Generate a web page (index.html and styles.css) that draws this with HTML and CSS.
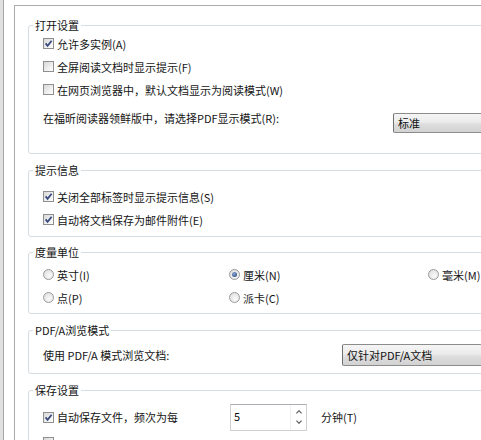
FILE: index.html
```html
<!DOCTYPE html>
<html>
<head>
<meta charset="utf-8">
<link rel="stylesheet" href="styles.css">
</head>
<body>
<div class="window">
  <div class="side"><div class="side-bar"></div></div>
  <div class="panel">

    <fieldset class="group g-open">
      <legend>打开设置</legend>
      <label class="row"><span class="chk"><svg viewBox="0 0 9 9"><path d="M1.6 4.4 L3.6 6.8 L7.6 1.8"/></svg></span>允许多实例(A)</label>
      <label class="row"><span class="chk"></span>全屏阅读文档时显示提示(F)</label>
      <label class="row"><span class="chk"></span>在网页浏览器中，默认文档显示为阅读模式(W)</label>
      <div class="row row-select">
        <span class="lbl lbl-wide">在福昕阅读器领鲜版中，请选择PDF显示模式(R):</span>
        <div class="combo combo-std">标准</div>
      </div>
    </fieldset>

    <fieldset class="group g-tips">
      <legend>提示信息</legend>
      <label class="row"><span class="chk"><svg viewBox="0 0 9 9"><path d="M1.6 4.4 L3.6 6.8 L7.6 1.8"/></svg></span>关闭全部标签时显示提示信息(S)</label>
      <label class="row"><span class="chk"><svg viewBox="0 0 9 9"><path d="M1.6 4.4 L3.6 6.8 L7.6 1.8"/></svg></span>自动将文档保存为邮件附件(E)</label>
    </fieldset>

    <fieldset class="group g-unit">
      <legend>度量单位</legend>
      <div class="radios">
        <label class="row"><span class="radio"></span>英寸(I)</label>
        <label class="row"><span class="radio on"></span>厘米(N)</label>
        <label class="row"><span class="radio"></span>毫米(M)</label>
        <label class="row"><span class="radio"></span>点(P)</label>
        <label class="row"><span class="radio"></span>派卡(C)</label>
      </div>
    </fieldset>

    <fieldset class="group g-pdfa">
      <legend>PDF/A浏览模式</legend>
      <div class="row row-pdfa">
        <span class="lbl lbl-pdfa">使用 PDF/A 模式浏览文档:</span>
        <div class="combo combo-pdfa">仅针对PDF/A文档</div>
      </div>
    </fieldset>

    <fieldset class="group g-save">
      <legend>保存设置</legend>
      <div class="row row-save">
        <label class="save-lbl"><span class="chk"><svg viewBox="0 0 9 9"><path d="M1.6 4.4 L3.6 6.8 L7.6 1.8"/></svg></span>自动保存文件，频次为每</label>
        <div class="spin">
          <span class="spin-val">5</span>
          <span class="spin-btns">
            <svg viewBox="0 0 7 4"><path d="M0.5 3.5 L3.5 0.5 L6.5 3.5"/></svg>
            <svg viewBox="0 0 7 4"><path d="M0.5 0.5 L3.5 3.5 L6.5 0.5"/></svg>
          </span>
        </div>
        <span class="unit">分钟(T)</span>
      </div>
      <div class="row row-next"><span class="chk"></span></div>
    </fieldset>

  </div>
</div>
</body>
</html>
```

FILE: styles.css
```css
body {
	margin: 0;
	overflow: hidden;
	background: #fff;
	font-family: "Noto Sans CJK SC", "Microsoft YaHei", sans-serif;
	font-size: 11px;
	line-height: 14px;
	color: #141414;
}

.window {
	display: flex;
	width: 560px;
	height: 440px;
}

.side {
	flex: none;
	width: 14px;
	display: flex;
}
.side-bar {
	width: 3px;
	background: #e0e0e0;
	border-right: 1px solid #a6a6a6;
}

.panel {
	flex: none;
	width: 530px;
	margin-top: 5px;
	padding-left: 13px;
	border-left: 1px solid #ababab;
	border-top: 1px solid #ababab;
}

/* group boxes */
.group {
	width: 500px;
	margin: 0;
	padding: 0;
	border: 1px solid #d6dde2;
	border-radius: 3px;
}
.group legend {
	margin-left: 4px;
	padding: 0 2px;
	line-height: 14px;
	color: #141414;
}
.g-open { margin-top: 12px; padding-bottom: 16px; }
.g-tips { margin-top: 9px; padding-top: 8px; padding-bottom: 5px; }
.g-unit { margin-top: 8px; padding-top: 4px; padding-bottom: 4px; }
.g-pdfa { margin-top: 9px; padding-top: 5px; padding-bottom: 5px; }
.g-save { margin-top: 9px; padding-top: 6px; }

.row {
	display: flex;
	align-items: center;
	height: 23px;
	padding-left: 14px;
	white-space: nowrap;
}

/* checkbox */
.chk {
	flex: none;
	box-sizing: border-box;
	width: 11px;
	height: 11px;
	margin-right: 3px;
	border: 1px solid #8e8f8f;
	background: linear-gradient(135deg, #d8d8d8, #f4f4f4 70%, #fff);
	display: flex;
	align-items: center;
	justify-content: center;
}
.chk svg {
	width: 9px;
	height: 9px;
	fill: none;
	stroke: #34487c;
	stroke-width: 1.7;
}

/* radio */
.radio {
	flex: none;
	box-sizing: border-box;
	width: 11px;
	height: 11px;
	margin-right: 3px;
	border: 1px solid #9a9a9a;
	border-radius: 50%;
	background: radial-gradient(circle at 60% 65%, #fafafa, #dadada);
	display: flex;
	align-items: center;
	justify-content: center;
}
.radio.on::after {
	content: "";
	width: 5px;
	height: 5px;
	border-radius: 50%;
	background: radial-gradient(circle at 40% 35%, #8ba7d4, #1f3e72);
}

.radios {
	display: grid;
	grid-template-columns: 200px 199px auto;
}
.radios .row { padding-left: 0; }
.radios .row:nth-child(3n+1) { padding-left: 14px; }

/* combo boxes */
.combo {
	flex: none;
	box-sizing: border-box;
	width: 140px;
	padding-left: 4px;
	border: 1px solid #8c8c8c;
	border-left-color: #707070;
	border-radius: 2px;
	background: linear-gradient(#f5f5f5, #ececec 45%, #dedede 55%, #d2d2d2);
	display: flex;
	align-items: center;
	color: #111;
}

.row-select {
	height: 36px;
	align-items: flex-start;
}
.lbl-wide {
	width: 350px;
	margin-top: 10px;
}
.combo-std {
	height: 20px;
	margin-top: 12px;
}

.row-pdfa { height: 26px; }
.lbl-pdfa { width: 299px; }
.combo-pdfa { height: 22px; }

/* autosave */
.row-save { height: 28px; }
.save-lbl {
	width: 187px;
	display: flex;
	align-items: center;
}
.spin {
	flex: none;
	box-sizing: border-box;
	width: 77px;
	height: 27px;
	border: 1px solid #d0d0d0;
	border-top-color: #abadb3;
	display: flex;
}
.spin-val {
	flex: 1;
	padding: 4px 0 0 3px;
	color: #111;
}
.spin-btns {
	width: 15px;
	display: flex;
	flex-direction: column;
	justify-content: center;
	gap: 6px;
	align-items: center;
	border-left: 1px solid #f0f0f0;
}
.spin-btns svg {
	width: 6px;
	height: 4px;
	fill: none;
	stroke: #555;
	stroke-width: 1.3;
}
.unit { margin-left: 14px; }

.row-next { height: 23px; }
```
